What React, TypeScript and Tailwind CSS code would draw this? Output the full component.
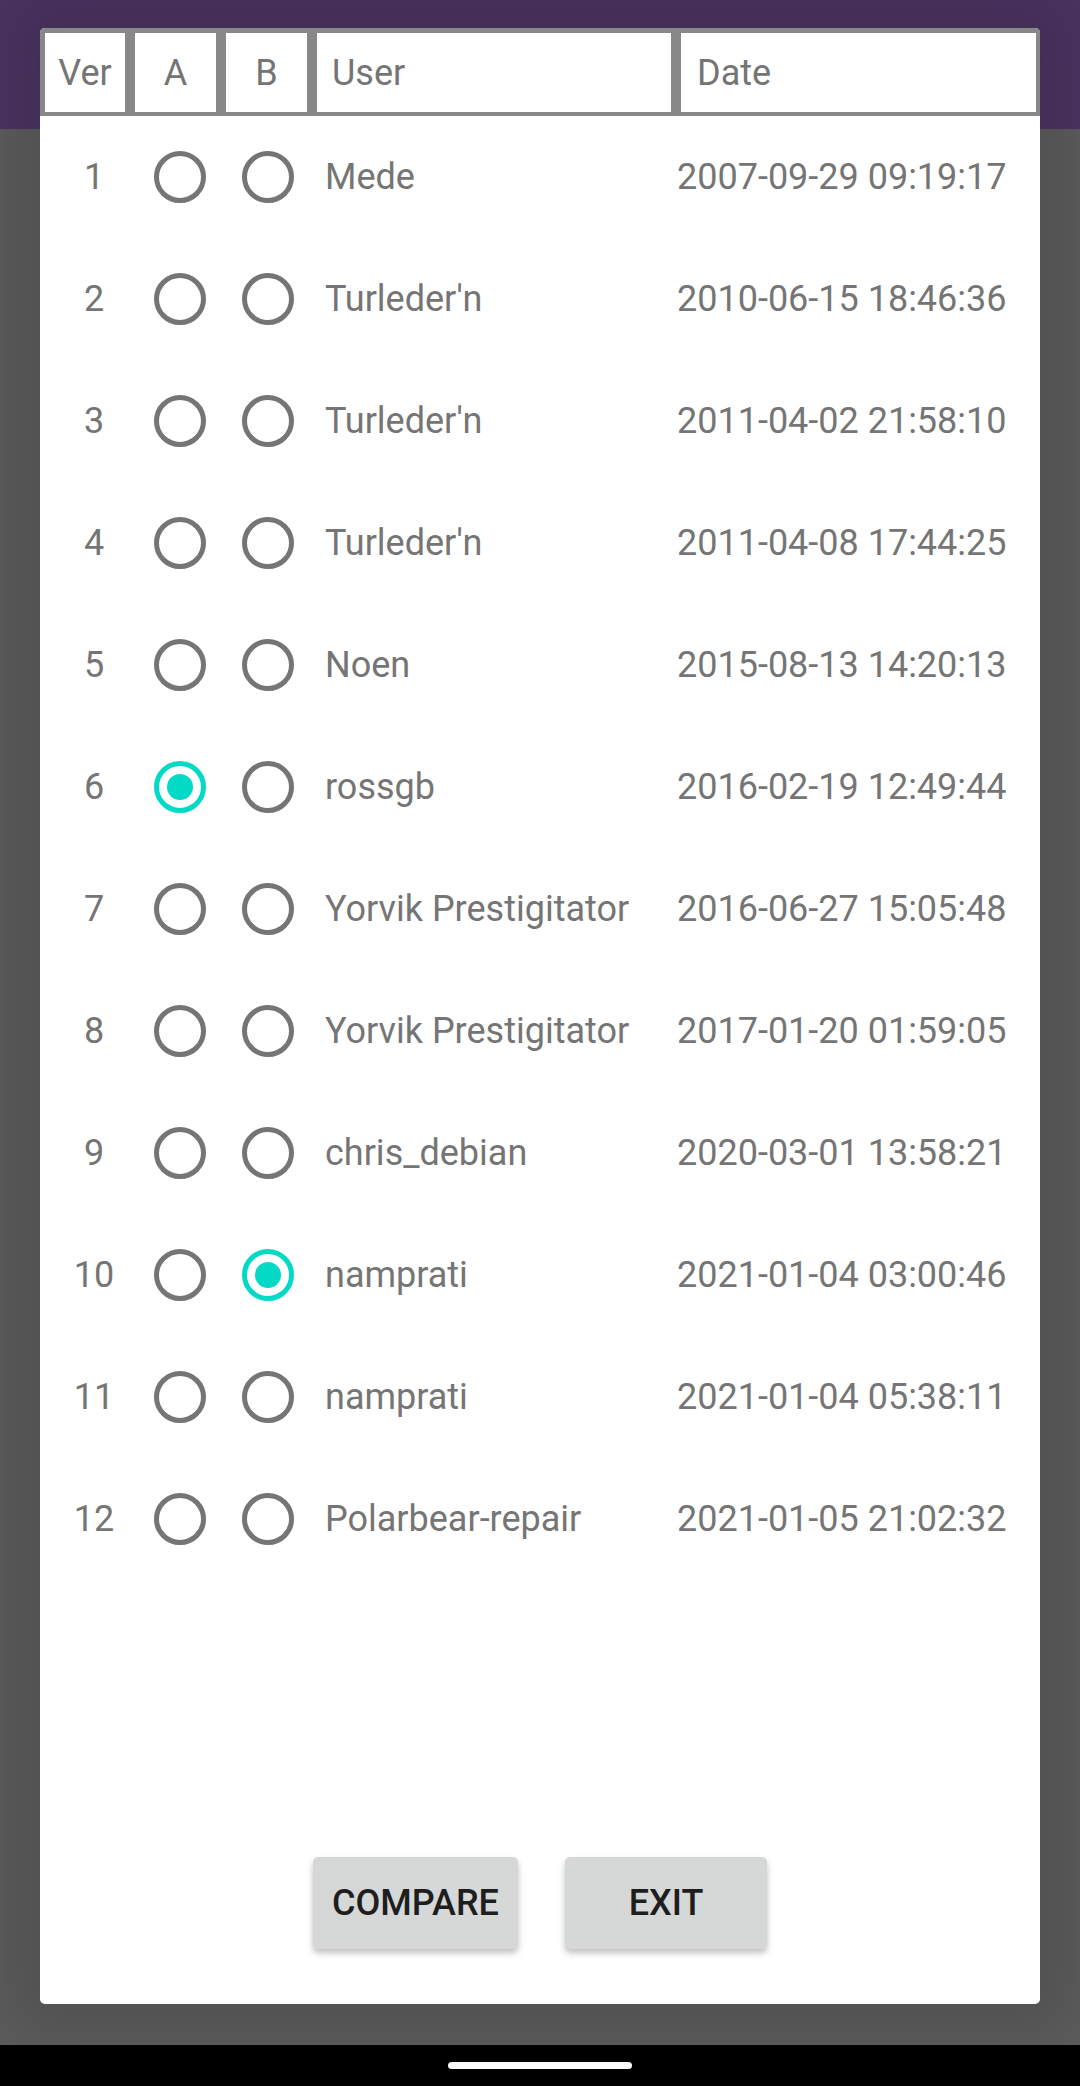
import React, { useState } from 'react'

// revision rows shown in the compare dialog
const rows = [
  { ver: 1, user: 'Mede', date: '2007-09-29 09:19:17' },
  { ver: 2, user: "Turleder'n", date: '2010-06-15 18:46:36' },
  { ver: 3, user: "Turleder'n", date: '2011-04-02 21:58:10' },
  { ver: 4, user: "Turleder'n", date: '2011-04-08 17:44:25' },
  { ver: 5, user: 'Noen', date: '2015-08-13 14:20:13' },
  { ver: 6, user: 'rossgb', date: '2016-02-19 12:49:44' },
  { ver: 7, user: 'Yorvik Prestigitator', date: '2016-06-27 15:05:48' },
  { ver: 8, user: 'Yorvik Prestigitator', date: '2017-01-20 01:59:05' },
  { ver: 9, user: 'chris_debian', date: '2020-03-01 13:58:21' },
  { ver: 10, user: 'namprati', date: '2021-01-04 03:00:46' },
  { ver: 11, user: 'namprati', date: '2021-01-04 05:38:11' },
  { ver: 12, user: 'Polarbear-repair', date: '2021-01-05 21:02:32' },
]

const Radio = ({ checked, onClick }: { checked: boolean; onClick: () => void }) => (
  <button
    onClick={onClick}
    className={`flex h-[52px] w-[52px] items-center justify-center rounded-full border-[5px] ${
      checked ? 'border-[#03dac5]' : 'border-[#757575]'
    }`}
  >
    {checked && <span className="block h-[26px] w-[26px] rounded-full bg-[#03dac5]" />}
  </button>
)

export default function App() {
  const [a, setA] = useState(6)
  const [b, setB] = useState(10)

  return (
    <div
      className="relative flex h-[2086px] w-[1080px] flex-col overflow-hidden bg-[#5a5a5a]"
      style={{ fontFamily: 'Roboto, "Noto Sans", sans-serif' }}
    >
      {/* dimmed page behind the dialog */}
      <div className="h-[129px] bg-[#4a3461]" />
      <div className="flex-1 bg-[#5c5c5c]" />
      <div className="flex h-[41px] items-center justify-center bg-black">
        <div className="h-[7px] w-[184px] rounded-full bg-white" />
      </div>

      {/* dialog */}
      <div className="absolute left-[40px] top-[28px] flex h-[1976px] w-[1000px] flex-col overflow-hidden rounded-[5px] bg-white shadow-[0_0_60px_30px_rgba(0,0,0,0.12)]">
        <div className="flex h-[88px] gap-[10px] bg-[#888888] pb-[4px] pl-[5px] pr-[4px] pt-[5px] text-[36px] text-[#757575]">
          <div className="flex w-[80px] items-center justify-center bg-white">Ver</div>
          <div className="flex w-[81px] items-center justify-center bg-white">A</div>
          <div className="flex w-[81px] items-center justify-center bg-white">B</div>
          <div className="flex w-[354px] items-center bg-white pl-[15px]">User</div>
          <div className="flex w-[355px] items-center bg-white pl-[16px]">Date</div>
        </div>

        <div className="flex flex-col">
          {rows.map((r) => (
            <div key={r.ver} className="flex h-[122px] items-center text-[36px] text-[#757575]">
              <div className="w-[108px] text-center">{r.ver}</div>
              <div className="flex w-[64px] justify-center">
                <Radio checked={a === r.ver} onClick={() => setA(r.ver)} />
              </div>
              <div className="ml-[24px] flex w-[64px] justify-center">
                <Radio checked={b === r.ver} onClick={() => setB(r.ver)} />
              </div>
              <div className="ml-[25px] w-[352px] whitespace-nowrap">{r.user}</div>
              <div className="whitespace-nowrap">{r.date}</div>
            </div>
          ))}
        </div>

        <div className="flex-1" />

        <div className="flex justify-center gap-[47px] pb-[55px]">
          <button className="h-[92px] w-[205px] rounded-[5px] bg-[#d6d7d7] text-[36px] font-medium text-[#1e1e1e] shadow-[0_4px_6px_rgba(0,0,0,0.25)]">
            COMPARE
          </button>
          <button className="h-[92px] w-[202px] rounded-[5px] bg-[#d6d7d7] text-[36px] font-medium text-[#1e1e1e] shadow-[0_4px_6px_rgba(0,0,0,0.25)]">
            EXIT
          </button>
        </div>
      </div>
    </div>
  )
}
